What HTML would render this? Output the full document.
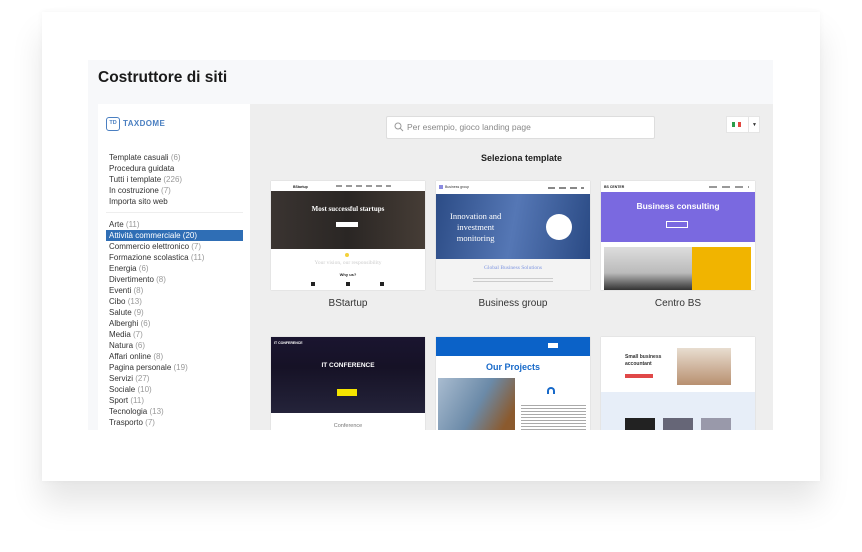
<!DOCTYPE html>
<html><head><meta charset="utf-8">
<style>
*{margin:0;padding:0;box-sizing:border-box}
body{width:862px;height:552px;background:#fff;position:relative;overflow:hidden;font-family:"Liberation Sans",sans-serif}
.a{position:absolute}
.card{left:42px;top:12px;width:778px;height:469px;background:#fff;box-shadow:0 22px 30px rgba(0,0,0,.10),0 0 6px rgba(0,0,0,.04)}
.inner{left:88px;top:60px;width:685px;height:370px;background:#f7f8fa;overflow:hidden}
.title{left:98px;top:69px;font-size:15.5px;font-weight:bold;color:#1a1a1a}
.side{left:98px;top:104px;width:152px;height:326px;background:#fff;overflow:hidden}
.main{left:250px;top:104px;width:523px;height:326px;background:#eeeeee;overflow:hidden}
.li{position:absolute;left:11px;font-size:8px;color:#333;line-height:11px;white-space:nowrap}
.li span{color:#999}
.sel{left:8px!important;width:137px;background:#2f6eb5;color:#fff!important;padding-left:3px}
.sel span{color:#fff}
.th{position:absolute;background:#fff;overflow:hidden;box-shadow:0 0 1px rgba(0,0,0,.2)}
.lbl{position:absolute;font-size:10px;color:#333;text-align:center;width:154px}
.nv{position:absolute;height:1.5px;background:#aaa}
</style></head><body>
<div class="a card"></div>
<div class="a inner"></div>
<div class="a title">Costruttore di siti</div>
<div class="a side">
  <div class="a" style="left:8px;top:13px;width:14px;height:14px;border:1.5px solid #4a7fc1;border-radius:3px;font-size:5.5px;color:#4a7fc1;font-weight:bold;text-align:center;line-height:11px">TD</div>
  <div class="a" style="left:25px;top:15px;font-size:8px;font-weight:bold;color:#4a7fc1;letter-spacing:.4px">TAXDOME</div>
  <div class="li" style="top:48px">Template casuali <span>(6)</span></div>
  <div class="li" style="top:59px">Procedura guidata</div>
  <div class="li" style="top:70px">Tutti i template <span>(226)</span></div>
  <div class="li" style="top:81px">In costruzione <span>(7)</span></div>
  <div class="li" style="top:92px">Importa sito web</div>
  <div class="a" style="left:8px;top:108px;width:137px;height:1px;background:#eee"></div>
  <div class="li" style="top:115px">Arte <span>(11)</span></div>
  <div class="li sel" style="top:126px">Attività commerciale <span>(20)</span></div>
  <div class="li" style="top:137px">Commercio elettronico <span>(7)</span></div>
  <div class="li" style="top:148px">Formazione scolastica <span>(11)</span></div>
  <div class="li" style="top:159px">Energia <span>(6)</span></div>
  <div class="li" style="top:170px">Divertimento <span>(8)</span></div>
  <div class="li" style="top:181px">Eventi <span>(8)</span></div>
  <div class="li" style="top:192px">Cibo <span>(13)</span></div>
  <div class="li" style="top:203px">Salute <span>(9)</span></div>
  <div class="li" style="top:214px">Alberghi <span>(6)</span></div>
  <div class="li" style="top:225px">Media <span>(7)</span></div>
  <div class="li" style="top:236px">Natura <span>(6)</span></div>
  <div class="li" style="top:247px">Affari online <span>(8)</span></div>
  <div class="li" style="top:258px">Pagina personale <span>(19)</span></div>
  <div class="li" style="top:269px">Servizi <span>(27)</span></div>
  <div class="li" style="top:280px">Sociale <span>(10)</span></div>
  <div class="li" style="top:291px">Sport <span>(11)</span></div>
  <div class="li" style="top:302px">Tecnologia <span>(13)</span></div>
  <div class="li" style="top:313px">Trasporto <span>(7)</span></div>
</div>
<div class="a main">
  <div class="a" style="left:136px;top:12px;width:269px;height:23px;background:#fff;border:1px solid #ddd;border-radius:2px"></div>
  <svg class="a" style="left:144px;top:18px" width="10" height="10" viewBox="0 0 10 10"><circle cx="4" cy="4" r="3" fill="none" stroke="#999" stroke-width="1"/><line x1="6.2" y1="6.2" x2="9" y2="9" stroke="#999" stroke-width="1"/></svg>
  <div class="a" style="left:157px;top:18px;font-size:8.5px;color:#888">Per esempio, gioco landing page</div>
  <div class="a" style="left:476px;top:12px;width:34px;height:17px;background:#fff;border:1px solid #e5e5e5"></div>
  <div class="a" style="left:482px;top:18px;width:3px;height:5px;background:#2a9d4a"></div>
  <div class="a" style="left:485px;top:18px;width:3px;height:5px;background:#fff"></div>
  <div class="a" style="left:488px;top:18px;width:3px;height:5px;background:#e2473f"></div>
  <div class="a" style="left:498px;top:12px;width:1px;height:17px;background:#e5e5e5"></div>
  <div class="a" style="left:502px;top:18px;font-size:5px;color:#333">▼</div>
  <div class="a" style="left:231px;top:49px;font-size:9px;font-weight:bold;color:#222">Seleziona template</div>

  <!-- row1 -->
  <div class="th" style="left:21px;top:77px;width:154px;height:109px">
    <div class="a" style="left:22px;top:4px;font-size:3.5px;font-weight:bold;color:#222">BStartup</div>
    <div class="nv" style="left:65px;top:4px;width:55px;background:repeating-linear-gradient(90deg,#999 0 6px,#fff 6px 10px)"></div>
    <div class="a" style="left:0;top:10px;width:154px;height:58px;background:linear-gradient(90deg,#3a3431,#2a2624 50%,#463d36)"></div>
    <div class="a" style="left:0;top:24px;width:154px;text-align:center;color:#fff;font-size:7px;font-weight:bold;font-family:'Liberation Serif',serif">Most successful startups</div>
    <div class="a" style="left:65px;top:41px;width:22px;height:5px;background:#fff"></div>
    <div class="a" style="left:74px;top:72px;width:4px;height:4px;border-radius:50%;background:#f3d13b"></div>
    <div class="a" style="left:0;top:79px;width:154px;text-align:center;color:#ccc;font-size:5.5px;font-family:'Liberation Serif',serif">Your vision, our responsibility</div>
    <div class="a" style="left:0;top:91px;width:154px;text-align:center;color:#222;font-size:4px;font-weight:bold">Why us?</div>
    <div class="a" style="left:40px;top:101px;width:4px;height:4px;background:#222"></div>
    <div class="a" style="left:75px;top:101px;width:4px;height:4px;background:#222"></div>
    <div class="a" style="left:109px;top:101px;width:4px;height:4px;background:#222"></div>
  </div>
  <div class="th" style="left:186px;top:77px;width:154px;height:109px">
    <div class="a" style="left:3px;top:4px;width:4px;height:4px;background:#8b8be0"></div>
    <div class="a" style="left:9px;top:4px;font-size:3.5px;color:#333">Business group</div>
    <div class="nv" style="left:112px;top:6px;width:36px;background:repeating-linear-gradient(90deg,#888 0 7px,#fff 7px 11px)"></div>
    <div class="a" style="left:0;top:13px;width:154px;height:65px;background:linear-gradient(100deg,#2c4c86,#5577b5 50%,#2a4a84)"></div>
    <div class="a" style="left:14px;top:30px;color:#fff;font-size:8.5px;line-height:11px;font-family:'Liberation Serif',serif;text-align:center">Innovation and<br>investment<br>monitoring</div>
    <div class="a" style="left:110px;top:33px;width:26px;height:26px;border-radius:50%;background:#fff"></div>
    <div class="a" style="left:0;top:78px;width:154px;height:31px;background:#f3f3f3"></div>
    <div class="a" style="left:0;top:84px;width:154px;text-align:center;color:#7f96e0;font-size:5.5px;font-family:'Liberation Serif',serif">Global Business Solutions</div>
    <div class="a" style="left:37px;top:95px;width:80px;height:8px;background:repeating-linear-gradient(#fff0 0 2px,#ccc 2px 3px)"></div>
  </div>
  <div class="th" style="left:351px;top:77px;width:154px;height:109px">
    <div class="a" style="left:3px;top:4px;font-size:3.5px;font-weight:bold;color:#222">BS CENTER</div>
    <div class="nv" style="left:108px;top:5px;width:40px;background:repeating-linear-gradient(90deg,#999 0 8px,#fff 8px 13px)"></div>
    <div class="a" style="left:0;top:11px;width:154px;height:50px;background:#7a69e0"></div>
    <div class="a" style="left:0;top:20px;width:154px;text-align:center;color:#fff;font-size:8.5px;font-weight:bold">Business consulting</div>
    <div class="a" style="left:65px;top:40px;width:22px;height:7px;border:1px solid #fff"></div>
    <div class="a" style="left:3px;top:66px;width:88px;height:43px;background:linear-gradient(#ddd,#bbb 60%,#333)"></div>
    <div class="a" style="left:91px;top:66px;width:59px;height:43px;background:#f1b400"></div>
  </div>
  <div class="lbl" style="left:21px;top:194px">BStartup</div>
  <div class="lbl" style="left:186px;top:194px">Business group</div>
  <div class="lbl" style="left:351px;top:194px">Centro BS</div>

  <!-- row2 -->
  <div class="th" style="left:21px;top:233px;width:154px;height:100px">
    <div class="a" style="left:0;top:0;width:154px;height:76px;background:linear-gradient(#1a1530,#161226 40%,#24233a)"></div>
    <div class="a" style="left:3px;top:4px;font-size:3.5px;font-weight:bold;color:#fff">IT CONFERENCE</div>
    <div class="a" style="left:0;top:25px;width:154px;text-align:center;color:#fff;font-size:6.5px;font-weight:bold">IT CONFERENCE</div>
    <div class="a" style="left:66px;top:52px;width:20px;height:7px;background:#f5e400"></div>
    <div class="a" style="left:0;top:86px;width:154px;text-align:center;color:#777;font-size:5.5px">Conference</div>
  </div>
  <div class="th" style="left:186px;top:233px;width:154px;height:100px">
    <div class="a" style="left:0;top:0;width:154px;height:19px;background:#0b62c8"></div>
    <div class="a" style="left:112px;top:6px;width:10px;height:5px;background:#fff"></div>
    <div class="a" style="left:0;top:25px;width:154px;text-align:center;color:#1769c9;font-size:9px;font-weight:bold">Our Projects</div>
    <div class="a" style="left:2px;top:41px;width:77px;height:59px;background:linear-gradient(120deg,#a9bcd0,#6b8aa8 50%,#8b5a2e 85%)"></div>
    <div class="a" style="left:111px;top:50px;width:8px;height:7px;border:2px solid #1769c9;border-bottom:none;border-radius:5px 5px 0 0"></div>
    <div class="a" style="left:85px;top:66px;width:65px;height:30px;background:repeating-linear-gradient(#fff 0 2px,#aaa 2px 3px)"></div>
  </div>
  <div class="th" style="left:351px;top:233px;width:154px;height:100px">
    <div class="a" style="left:24px;top:17px;font-size:5px;font-weight:bold;color:#333;line-height:7px">Small business<br>accountant</div>
    <div class="a" style="left:24px;top:37px;width:28px;height:4px;background:#e04848"></div>
    <div class="a" style="left:76px;top:11px;width:54px;height:37px;background:linear-gradient(#e8ddd0,#b89070)"></div>
    <div class="a" style="left:0;top:55px;width:154px;height:45px;background:#e7eef8"></div>
    <div class="a" style="left:24px;top:81px;width:30px;height:19px;background:#222"></div>
    <div class="a" style="left:62px;top:81px;width:30px;height:19px;background:#667"></div>
    <div class="a" style="left:100px;top:81px;width:30px;height:19px;background:#99a"></div>
  </div>
</div>
</body></html>
